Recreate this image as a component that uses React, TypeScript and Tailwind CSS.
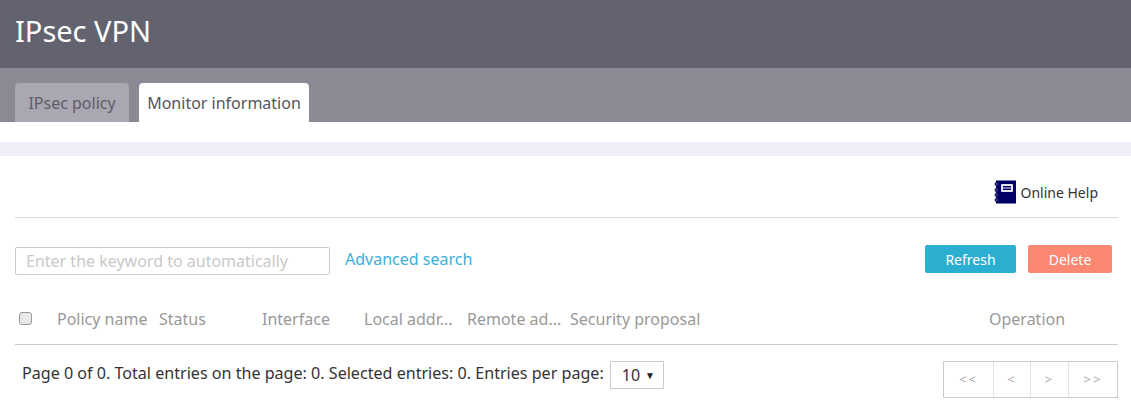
import * as React from "react";

const columns = [
  { label: "Policy name", width: "w-[102px]" },
  { label: "Status", width: "w-[103px]" },
  { label: "Interface", width: "w-[102px]" },
  { label: "Local addr...", width: "w-[103px]" },
  { label: "Remote ad...", width: "w-[103px]" },
  { label: "Security proposal", width: "w-[419px]" },
  { label: "Operation", width: "w-[100px]" },
];

const pager = [
  { label: "<<", width: "w-[49px]" },
  { label: "<", width: "w-[37px]" },
  { label: ">", width: "w-[38px]" },
  { label: ">>", width: "w-[49px]" },
];

function HelpIcon() {
  return (
    <svg width="22" height="24" viewBox="0 0 22 24" className="shrink-0">
      <rect x="2" y="0.5" width="20" height="23" fill="#000066" />
      <rect x="7" y="4" width="12" height="8" rx="1" fill="#e4e4f2" />
      <rect x="9" y="6" width="8" height="1.5" fill="#000066" />
      <rect x="9" y="8.5" width="8" height="1.5" fill="#000066" />
      <circle cx="2.5" cy="4" r="2" fill="#2a2a78" />
      <circle cx="2.5" cy="10" r="2" fill="#2a2a78" />
      <circle cx="2.5" cy="15" r="2" fill="#2a2a78" />
      <circle cx="2.5" cy="20" r="2" fill="#2a2a78" />
    </svg>
  );
}

export default function App() {
  return (
    <div className="w-[1131px] h-[412px] overflow-hidden bg-white font-['Noto_Sans','Open_Sans',sans-serif]">
      <div className="h-[68px] bg-[#62636f] flex items-center pl-[15px] pb-[8px]">
        <h1 className="text-[29px] leading-none text-white">IPsec VPN</h1>
      </div>

      <div className="h-[54px] bg-[#8b8993] flex items-end pl-[15px] gap-[10px]">
        <div className="h-[39px] w-[114px] rounded-t-[4px] bg-[#a9a7b2] text-[#5e5c66] text-[16px] flex items-center justify-center">
          IPsec policy
        </div>
        <div className="h-[39px] w-[170px] rounded-t-[4px] bg-white text-[#555560] text-[16px] flex items-center justify-center">
          Monitor information
        </div>
      </div>

      <div className="h-[14px] mt-[20px] bg-[#eeeef8]" />

      <div className="px-[15px] w-[1118px] box-content">
        <div className="h-[62px] w-[1103px] border-b border-[#d9d9d9] flex items-center justify-end pr-[20px] pt-[11px] gap-[5px]">
          <HelpIcon />
          <span className="text-[14px] text-[#333]">Online Help</span>
        </div>

        <div className="w-[1103px] flex items-center mt-[28px] h-[30px]">
          <input
            readOnly
            placeholder="Enter the keyword to automatically"
            className="w-[315px] h-[28px] border border-[#ccc] rounded-[2px] px-[10px] text-[16px] outline-none placeholder:text-[#c9c9c9]"
          />
          <a className="ml-[15px] mb-[5px] text-[16px] text-[#3daed9]">Advanced search</a>
          <button className="ml-auto mb-[4px] w-[91px] h-[28px] rounded-[2px] bg-[#2aafd1] text-white text-[14px]">
            Refresh
          </button>
          <button className="ml-[12px] mb-[4px] mr-[6px] w-[84px] h-[28px] rounded-[2px] bg-[#fa8872] text-white text-[14px]">
            Delete
          </button>
        </div>

        <div className="w-[1103px] h-[56px] mt-[13px] pt-[4px] border-b border-[#ccc] flex items-center text-[16px] text-[#999]">
          <div className="w-[42px] pl-[4px] flex items-center">
            <span className="w-[13px] h-[13px] rounded-[3px] border border-[#9a9a9a] bg-[#e9e9e9]" />
          </div>
          {columns.map((col) => (
            <div key={col.label} className={`${col.width} shrink-0 whitespace-nowrap`}>
              {col.label}
            </div>
          ))}
        </div>

        <div className="w-[1103px] flex items-start pt-[16px] pl-[7px] text-[16px] text-[#333]">
          <div className="flex items-center h-[28px] whitespace-nowrap">
            <span className="text-[16.1px] pb-[3px]">Page 0 of 0. Total entries on the page: 0. Selected entries: 0. Entries per page:</span>
            <div className="ml-[6px] w-[54px] h-[28px] border border-[#ccc] flex items-center pl-[11px] gap-[5px]">
              <span>10</span>
              <span className="text-[10px] text-[#222]">▼</span>
            </div>
          </div>
          <div className="ml-auto flex h-[37px] border border-[#ccc] text-[13px] text-[#aaa]">
            {pager.map((p, i) => (
              <div
                key={p.label}
                className={`${p.width} flex items-center justify-center tracking-[2px] ${i > 0 ? "border-l border-[#e2e2e2]" : ""}`}
              >
                {p.label}
              </div>
            ))}
          </div>
        </div>
      </div>
    </div>
  );
}
